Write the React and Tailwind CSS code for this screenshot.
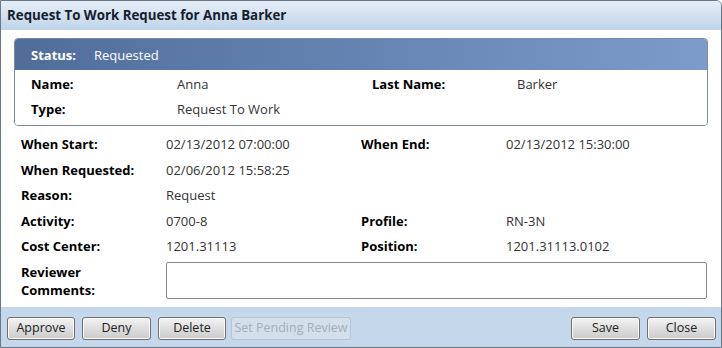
import React from 'react';

const font = { fontFamily: '"Open Sans", "Noto Sans", sans-serif' };

function Btn({ children, w, disabled }) {
  return (
    <button
      className={`h-[23px] ${w} rounded-[3px] border text-[12.5px] leading-none ${
        disabled
          ? 'border-[#b7c3cf] bg-[#d3e0ec] text-[#a3adb7]'
          : 'border-[#707070] bg-gradient-to-b from-[#f4f4f4] via-[#dedede] to-[#cbcbcb] text-[#222] shadow-[inset_0_0_0_1px_#fafafa]'
      }`}
    >
      {children}
    </button>
  );
}

function Row({ l1, v1, l2, v2 }) {
  return (
    <div className="flex items-center h-[25.5px]">
      <div className="w-[145px] shrink-0 font-bold text-black">{l1}</div>
      <div className="w-[195px] shrink-0 text-[#333]">{v1}</div>
      {l2 && <div className="w-[145px] shrink-0 font-bold text-black">{l2}</div>}
      {v2 && <div className="text-[#333]">{v2}</div>}
    </div>
  );
}

export default function App() {
  return (
    <div className="w-[722px] h-[348px] bg-white text-[13px]" style={font}>
      <div className="w-full h-full flex flex-col border border-[#6a7786] rounded-tr-[6px] overflow-hidden">
        {/* Title */}
        <div className="h-[29px] shrink-0 flex items-center px-[6px] pt-[1px] bg-gradient-to-b from-[#e6eef7] to-[#bfd4e9]">
          <span className="font-bold text-[13.3px] text-[#15202c]">Request To Work Request for Anna Barker</span>
        </div>

        {/* Body */}
        <div className="flex-1 bg-white flex flex-col px-[13px] pt-[8px]">
          <div className="rounded-[4px] border border-[#7c8ba0] overflow-hidden">
            <div className="h-[31px] flex items-center px-[16px] pt-[3px] bg-gradient-to-r from-[#506d9a] to-[#7c9bcb] text-white">
              <span className="font-bold w-[63px]">Status:</span>
              <span>Requested</span>
            </div>
            <div className="bg-white px-[16px] pt-[2px] pb-[3px]">
              <div className="flex items-center h-[25px]">
                <div className="w-[146px] font-bold">Name:</div>
                <div className="w-[195px] text-[#333]">Anna</div>
                <div className="w-[145px] font-bold">Last Name:</div>
                <div className="text-[#333]">Barker</div>
              </div>
              <div className="flex items-center h-[25px]">
                <div className="w-[146px] font-bold">Type:</div>
                <div className="text-[#333]">Request To Work</div>
              </div>
            </div>
          </div>

          <div className="pl-[7px] pt-[6px]">
            <Row l1="When Start:" v1="02/13/2012 07:00:00" l2="When End:" v2="02/13/2012 15:30:00" />
            <Row l1="When Requested:" v1="02/06/2012 15:58:25" />
            <Row l1="Reason:" v1="Request" />
            <Row l1="Activity:" v1="0700-8" l2="Profile:" v2="RN-3N" />
            <Row l1="Cost Center:" v1="1201.31113" l2="Position:" v2="1201.31113.0102" />
            <div className="flex items-start pt-[2px]">
              <div className="w-[145px] shrink-0 font-bold leading-[18.5px] pt-[1px]">
                Reviewer
                <br />
                Comments:
              </div>
              <div className="flex-1 h-[37px] mr-[1px] border border-[#8a8a8a] rounded-[2px] bg-white" />
            </div>
          </div>
        </div>

        {/* Footer */}
        <div className="h-[40px] shrink-0 bg-[#c4d7eb] flex items-center pl-[6px] pr-[5px] pt-[3px]">
          <div className="flex gap-[7px]">
            <Btn w="w-[68px]">Approve</Btn>
            <Btn w="w-[69px]">Deny</Btn>
            <Btn w="w-[68px]">Delete</Btn>
          </div>
          <div className="ml-[5px]">
            <Btn w="w-[120px]" disabled>Set Pending Review</Btn>
          </div>
          <div className="ml-auto flex gap-[7px]">
            <Btn w="w-[69px]">Save</Btn>
            <Btn w="w-[69px]">Close</Btn>
          </div>
        </div>
      </div>
    </div>
  );
}
